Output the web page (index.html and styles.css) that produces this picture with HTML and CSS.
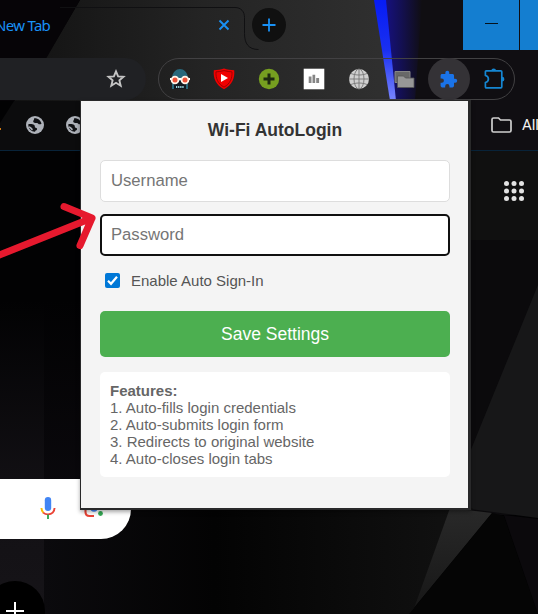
FILE: index.html
```html
<!DOCTYPE html>
<html lang="en">
<head>
<meta charset="utf-8">
<title>New Tab</title>
<link rel="stylesheet" href="styles.css">
</head>
<body>
<svg class="wallpaper" viewBox="0 0 538 614" aria-hidden="true">
  <defs>
    <linearGradient id="top" x1="0" x2="1"><stop offset="0" stop-color="#121212"/><stop offset=".5" stop-color="#242424"/><stop offset="1" stop-color="#303030"/></linearGradient>
    <linearGradient id="glow" x1="0" x2="1"><stop offset="0" stop-color="#17108a"/><stop offset=".4" stop-color="#14105c"/><stop offset="1" stop-color="#100e12"/></linearGradient>
    <linearGradient id="beam" x1="0" y1="0" x2="0" y2="1"><stop offset="0" stop-color="#071cf5"/><stop offset=".5" stop-color="#1a30f0"/><stop offset="1" stop-color="#7b87ff"/></linearGradient>
    <linearGradient id="low" x1="0" x2="1"><stop offset="0" stop-color="#0b0a0d"/><stop offset=".4" stop-color="#030303"/><stop offset="1" stop-color="#121212"/></linearGradient>
    <linearGradient id="left" x1="0" y1="0" x2="0" y2="1"><stop offset="0" stop-color="#020203"/><stop offset=".6" stop-color="#121014"/><stop offset="1" stop-color="#161418"/></linearGradient>
    <linearGradient id="leftEdge" x1="0" y1="0" x2="0" y2="1"><stop offset="0" stop-color="#020203"/><stop offset="1" stop-color="#0b090d"/></linearGradient>
    <linearGradient id="shard" x1="0" y1="0" x2="0" y2="1"><stop offset="0" stop-color="#292929"/><stop offset="1" stop-color="#161616"/></linearGradient>
  </defs>
  <path fill="#020203" d="M0 0h538v614H0z"/>
  <path fill="url(#top)" d="M80 0h315v101H14l33-45z"/>
  <path fill="#060407" d="M0 0h80L47 57 14 101H0z"/>
  <path fill="#0c0c0d" d="M14 101h67v50H0v-28z"/>
  <path fill="#100e12" d="M381 0h157v151H394z"/>
  <path fill="url(#glow)" d="M382 0h40l-7 101h-20z"/>
  <path fill="url(#beam)" d="M374 0h12l10 101h-6z"/>
  <path fill="#101010" d="M468 151h70v89h-70z"/>
  <path fill="#0b0a0c" d="M468 240h70v275h-70z"/>
  <path fill="#171718" d="M538 285v233l-68-9v-57z"/>
  <path fill="url(#low)" d="M43 508h430l-62 106H43z"/>
  <path fill="url(#left)" d="M0 300h44v314H0z"/>
  <path fill="url(#leftEdge)" d="M44 300h37v210H44z"/>
  <path fill="url(#shard)" d="M450 508l42 5-83 101h3z"/>
  <path fill="#050505" d="M492 513l12 3 34 98H409z"/>
  <path fill="#0b090c" d="M504 515l34 4v95z"/>
  <path fill="none" stroke="#101012" d="M60 7.500h175c6 0 9.500 4 9.500 10v16c0 10 4 16 14 16"/>
</svg>

<div class="browser">
  <header class="tabs">
    <span class="tab-title">New Tab</span>
    <svg class="tab-close" viewBox="0 0 12 12"><path d="M1.500 1.500l9 9M10.500 1.500l-9 9"/></svg>
    <span class="new-tab"><svg viewBox="0 0 14 14"><path d="M7 .5v13M.5 7h13"/></svg></span>
    <div class="window-controls"><span class="control"><i class="dash"></i></span><span class="control"></span></div>
  </header>

  <div class="toolbar">
    <div class="address">
      <svg class="star" viewBox="0 0 20 20"><path d="M10 2.400l2.100 5 5.400.4-4.100 3.600 1.300 5.300-4.700-2.900-4.700 2.900 1.300-5.300-4.100-3.600 5.400-.4z"/></svg>
    </div>
    <div class="extensions">
      <span class="ext"><svg viewBox="0 0 22 22"><path fill="#28677b" d="M3 9C4 4 7 1 11 1s7 3 8 8v12h-2v-5H5v5H3z"/><path fill="#111820" d="M5 13h12v8H5z"/><path stroke="#9bd5df" stroke-width="1.800" stroke-dasharray="1.300 .8" d="M7 19h8.200"/><path stroke="#fff" stroke-width="2" d="M1 11h20"/><circle cx="6" cy="12" r="3.400" fill="#ed5137" stroke="#fff4e9" stroke-width="1.800"/><circle cx="16" cy="12" r="3.400" fill="#ed5137" stroke="#fff4e9" stroke-width="1.800"/></svg></span>
      <span class="ext"><svg viewBox="0 0 22 22"><path fill="#f00000" d="M11 .5c3 1.200 7 1.500 10.200 1.700.8 8-2.200 15-10.200 19C3 17.200 0 10.200.8 2.200 4 2 8 1.700 11 .5z"/><path fill="none" stroke="#8c0000" stroke-width=".8" d="M11 2.600c3 .8 5.500 1.100 8 1.300.4 6.500-2 12-8 15.200-6-3.200-8.400-8.700-8-15.200 2.500-.2 5-.5 8-1.300z"/><path fill="#fff" d="M8 6v8l7-4z"/></svg></span>
      <span class="ext"><svg viewBox="0 0 22 22"><circle cx="11" cy="11" r="10.200" fill="#769f20"/><path stroke="#1e2a10" stroke-width="3" d="M11 5.500v11M5.500 11h11"/></svg></span>
      <span class="ext"><svg viewBox="0 0 22 22"><path fill="#fff" d="M.7.700h20.600v20.600H.7z"/><path fill="#858585" d="M5.700 8.500h2.800V15H5.700zM9.500 6.700h2.700V15H9.500zM13.200 10h2.900v5h-2.900z"/></svg></span>
      <span class="ext"><svg viewBox="0 0 22 22"><circle cx="11" cy="11" r="10" fill="#d0d0d0"/><g fill="none" stroke="#777" stroke-width=".9"><ellipse cx="11" cy="11" rx="5" ry="10"/><path d="M11 1v20M1 11h20M3 5.500c5 2 11 2 16 0M3 16.500c5-2 11-2 16 0"/></g></svg></span>
      <span class="ext"><svg viewBox="0 0 22 22"><path fill="#686868" stroke="#858585" d="M2 3.500h15v11H2z"/><path fill="#979797" stroke="#555" stroke-width=".8" d="M4.500 8h6l2 2h8.500v9.500H4.500z"/></svg></span>
      <span class="ext active"><svg viewBox="0 0 24 24"><path fill="#1a73e8" d="M20.500 11H19V7c0-1.100-.9-2-2-2h-4V3.500a2.500 2.500 0 0 0-5 0V5H4c-1.100 0-2 .9-2 2v3.800h1.500a2.700 2.700 0 0 1 0 5.400H2V20c0 1.100.9 2 2 2h3.800v-1.500a2.700 2.700 0 0 1 5.400 0V22H17c1.100 0 2-.9 2-2v-4h1.500a2.500 2.500 0 0 0 0-5z"/></svg></span>
      <span class="ext"><svg viewBox="0 0 22 22"><path fill="#1586d2" d="M8.300 3a2.400 2.400 0 0 1 4.800 0zM19 8.800a2.400 2.400 0 0 1 0 4.800z"/><path fill="none" stroke="#1586d2" stroke-width="1.700" stroke-linejoin="round" d="M3.200 2.800h14.600q1 0 1 1v15q0 1-1 1H3.400q-1 0-1-1v-4.300c4-1 4-6 0-7V3.600q0-.8.8-.8z"/></svg></span>
    </div>
  </div>

  <div class="bookmarks">
    <span class="orange-dot"></span>
    <svg class="globe" viewBox="0 0 18 18"><circle cx="9" cy="9" r="9" fill="#aeb2b9"/><g fill="#111215"><path d="M8 2.400c3-.6 6.700 1.600 7.500 5.300-1.500 1-2.600.8-3.500-.2-.8-.9-1.800-.5-3-.6C7.400 6.700 7 5.900 7.300 4.800c.2-.7.900-.7.7-2.400z"/><path d="M2.300 8.200c2.200-.4 4.500-.2 5.900.8 1.300 1-.1 2.200 1.400 2.700 1.300.4 1.900 1 1.300 2.100-.5.900-1.700.4-1.800 1.900-3.500.2-6.800-2.800-6.800-7.500z"/></g><path fill="none" stroke="#aeb2b9" stroke-width="1.700" d="M3 11c2 0 1.900 2.400 3.700 2.500"/></svg>
    <svg class="globe" viewBox="0 0 18 18"><circle cx="9" cy="9" r="9" fill="#aeb2b9"/><g fill="#111215"><path d="M8 2.400c3-.6 6.700 1.600 7.500 5.300-1.500 1-2.600.8-3.500-.2-.8-.9-1.800-.5-3-.6C7.400 6.700 7 5.900 7.300 4.800c.2-.7.900-.7.7-2.400z"/><path d="M2.300 8.200c2.200-.4 4.500-.2 5.900.8 1.300 1-.1 2.200 1.400 2.700 1.300.4 1.900 1 1.300 2.100-.5.900-1.700.4-1.800 1.900-3.500.2-6.800-2.800-6.800-7.500z"/></g><path fill="none" stroke="#aeb2b9" stroke-width="1.700" d="M3 11c2 0 1.900 2.400 3.700 2.500"/></svg>
    <div class="all-bookmarks">
      <svg class="folder" viewBox="0 0 21 16"><path d="M2.500 1h5l2 2h9q1.500 0 1.500 1.500v9q0 1.500-1.500 1.500h-16Q1 15 1 13.500v-11Q1 1 2.500 1z"/></svg>
      <span>All</span>
    </div>
  </div>

  <main class="page">
    <svg class="apps" viewBox="0 0 20 20"><g fill="#e3e3e3"><circle cx="2.500" cy="2.500" r="2.500"/><circle cx="10" cy="2.500" r="2.500"/><circle cx="17.500" cy="2.500" r="2.500"/><circle cx="2.500" cy="10" r="2.500"/><circle cx="10" cy="10" r="2.500"/><circle cx="17.500" cy="10" r="2.500"/><circle cx="2.500" cy="17.500" r="2.500"/><circle cx="10" cy="17.500" r="2.500"/><circle cx="17.500" cy="17.500" r="2.500"/></g></svg>
    <div class="search">
      <svg class="mic" viewBox="0 0 16 22"><rect x="4.800" y="0" width="6.400" height="14" rx="3.200" fill="#4285f4"/><g fill="none" stroke-width="1.900"><path stroke="#fbbc04" d="M1.500 11c0 2 .7 3.700 2 4.900"/><path stroke="#ea4335" d="M3.200 15.600c2.800 2.500 7.200 2.200 9.500 0 1.200-1.100 1.800-2.600 1.800-4.600"/><path stroke="#34a853" d="M8 17.500V22"/></g></svg>
      <svg class="lens" viewBox="0 0 20 20"><circle cx="10" cy="10" r="3.700" fill="#4285f4"/><circle cx="16.500" cy="15.500" r="2.400" fill="#34a853"/><path fill="none" stroke="#ea4335" stroke-width="2.100" d="M1.500 11v3q0 4 4 4H10"/></svg>
    </div>
    <span class="shortcut"><svg viewBox="0 0 18 18"><path d="M9 0v18M0 9h18"/></svg></span>
  </main>
</div>

<form class="popup">
  <h1>Wi-Fi AutoLogin</h1>
  <input class="field" type="text" placeholder="Username">
  <input class="field focused" type="password" placeholder="Password">
  <label class="option">
    <svg class="check" viewBox="0 0 15 15"><rect width="15" height="15" rx="2" fill="#0078d7"/><path d="M3 7.800l3 3L12 3.800"/></svg>
    <span>Enable Auto Sign-In</span>
  </label>
  <button class="save" type="button">Save Settings</button>
  <section class="features">
    <strong>Features:</strong>
    <span>1. Auto-fills login credentials</span>
    <span>2. Auto-submits login form</span>
    <span>3. Redirects to original website</span>
    <span>4. Auto-closes login tabs</span>
  </section>
</form>

<svg class="arrow" viewBox="0 0 100 110" aria-hidden="true"><path d="M-3 76L92 38M64 26.500L92 38 80 65.500"/></svg>
</body>
</html>
```

FILE: styles.css
```css
* { box-sizing: border-box; }
body {
  margin: 0;
  width: 538px;
  height: 614px;
  overflow: hidden;
  position: relative;
  background: #020203;
  font-family: "Liberation Sans", Arial, sans-serif;
}
svg { display: block; flex: none; }
.wallpaper { position: absolute; inset: 0; width: 538px; height: 614px; }
.browser { position: relative; height: 614px; display: flex; flex-direction: column; }

.tabs { height: 58px; display: flex; align-items: flex-start; }
.tab-title {
  width: 218px;
  margin-left: -5px;
  padding-top: 14px;
  color: #1991f5;
  font: 15px/22px "Noto Sans", sans-serif;
  letter-spacing: -0.7px;
  white-space: nowrap;
}
.tab-close { width: 12px; height: 12px; margin: 19px 0 0 5px; fill: none; stroke: #1991f5; stroke-width: 1.9; }
.new-tab {
  width: 34px; height: 34px; margin: 8px 0 0 22px;
  display: grid; place-items: center;
  border-radius: 50%; background: #101010;
}
.new-tab svg { width: 14px; height: 14px; stroke: #1991f5; stroke-width: 1.8; }
.window-controls { margin-left: auto; width: 75px; height: 50px; display: flex; gap: 1px; }
.control { width: 56px; flex: none; display: grid; place-items: center; background: #147ed0; }
.control:last-child { width: 18px; }
.dash { width: 13px; height: 1px; margin-top: -3px; background: #06121c; }

.toolbar { height: 42px; display: flex; gap: 12px; }
.address {
  width: 146px; padding-right: 20px;
  display: flex; align-items: center; justify-content: flex-end;
  border-radius: 0 21px 21px 0; background: #202124;
}
.star { width: 20px; height: 20px; fill: none; stroke: #c4c4c4; stroke-width: 1.9; }
.extensions {
  width: 357px;
  display: flex; align-items: center; gap: 3px;
  border: 1px solid #424143; border-radius: 21px;
}
.ext { width: 42px; height: 42px; margin-left: -0.1px; flex: none; display: grid; place-items: center; border-radius: 50%; }
.ext:first-child { margin-left: -0.5px; }
.ext svg { width: 22px; height: 22px; }
.ext.active { background: #343236; }
.ext.active svg { width: 19px; height: 19px; }

.bookmarks {
  height: 51px; display: flex; align-items: center; gap: 22px;
  border-bottom: 1px solid #082339;
}
.orange-dot { width: 1px; height: 2px; margin: 7px 3px 0 0; background: #d27a13; }
.globe { width: 18px; height: 18px; }
.all-bookmarks {
  margin-left: auto; margin-right: -1px;
  display: flex; align-items: center; gap: 10px;
  color: #f3f3f3; font: 15px/20px Roboto, sans-serif; white-space: nowrap;
}
.folder { width: 21px; height: 16px; fill: none; stroke: #cfcfcf; stroke-width: 1.7; }

.page { flex: 1; display: flex; flex-direction: column; align-items: flex-start; }
.apps { width: 20px; height: 20px; margin: 30px 14px 0 auto; }
.search {
  width: 131px; height: 60px; margin-top: 278px; padding-left: 40px;
  display: flex; align-items: center; gap: 28px;
  border-radius: 0 30px 30px 0; background: #fff;
}
.mic { width: 16px; height: 22px; margin-top: -2px; }
.lens { width: 20px; height: 20px; margin-top: -2px; }
.shortcut {
  width: 60px; height: 60px; margin: 42px 0 -40px -15px; flex: none;
  display: grid; place-items: center; border-radius: 50%; background: #000;
}
.shortcut svg { width: 18px; height: 18px; stroke: #fff; stroke-width: 2; }

.popup {
  position: absolute; left: 80px; top: 100px; width: 391px; height: 410px;
  margin: 0; padding: 19px 18px 0 19px;
  display: flex; flex-direction: column;
  border: solid #29292a; border-width: 1px 3px 2px 1px;
  background: #f4f4f4;
  box-shadow: 0 2px 4px rgba(0, 0, 0, .35);
}
.popup h1 {
  margin: 0 0 20px; color: #333;
  font-size: 17.5px; line-height: 20px; text-align: center;
}
.field {
  width: 100%; height: 42px; margin: 0 0 12px; padding: 0 10px;
  border: 1px solid #ddd; border-radius: 5px; outline: 0; background: #fff;
  font: 16.67px "Liberation Sans", Arial, sans-serif;
}
.field::placeholder { color: #757575; }
.field.focused { padding: 0 9px; border: 2px solid #101010; }
.option {
  height: 18px; margin: 3px 0 0 5px;
  display: flex; align-items: center; gap: 11px;
  color: #555; font-size: 15px;
}
.check { width: 15px; height: 15px; fill: none; stroke: #fff; stroke-width: 2.2; }
.check rect { stroke: none; }
.save {
  height: 46px; flex: none; margin: 22px 0 15px; padding: 0;
  border: 0; border-radius: 5px; color: #fff; background: #4caf50;
  font: 17.5px "Liberation Sans", Arial, sans-serif;
}
.features {
  height: 105px; padding: 10px;
  display: flex; flex-direction: column;
  border-radius: 5px; background: #fff;
  color: #666; font-size: 15px; line-height: 17px;
}
.arrow {
  position: absolute; left: 0; top: 180px; width: 100px; height: 110px;
  fill: none; stroke: #e6192e; stroke-width: 7; stroke-linecap: round; stroke-linejoin: round;
}
```
